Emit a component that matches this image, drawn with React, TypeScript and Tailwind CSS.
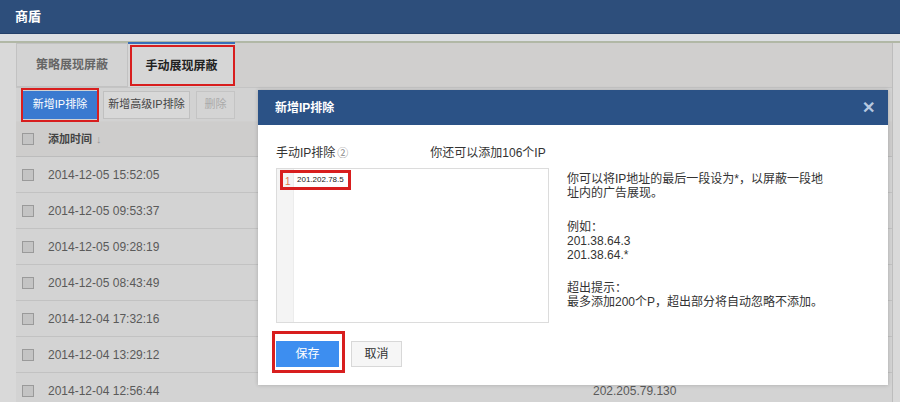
import React from 'react';

const rows = [
    { time: '2014-12-05 15:52:05', ip: '' },
    { time: '2014-12-05 09:53:37', ip: '' },
    { time: '2014-12-05 09:28:19', ip: '' },
    { time: '2014-12-05 08:43:49', ip: '' },
    { time: '2014-12-04 17:32:16', ip: '' },
    { time: '2014-12-04 13:29:12', ip: '' },
    { time: '2014-12-04 12:56:44', ip: '202.205.79.130' },
];

const Checkbox: React.FC = () => (
    <span className="inline-block w-[12px] h-[12px] border border-[#9a9a9a] bg-[#c4c4c4] shrink-0" />
);

const App: React.FC = () => {
    return (
        <div
            className="relative w-[900px] h-[402px] overflow-hidden bg-[#d9d9d9]"
            style={{ fontFamily: '"Liberation Sans", "Noto Sans CJK SC", sans-serif' }}
        >
            {/* top bar */}
            <div className="h-[34px] bg-[#2d4e7b] flex items-center pl-[15px] border-b border-[#23406a]">
                <span className="text-white text-[13px] font-bold">商盾</span>
            </div>
            <div className="h-[7px] bg-[#dcdfe3]" />
            <div className="h-[2px] bg-[#b1b8a6]" />

            {/* page body */}
            <div className="ml-[16px] w-[877px] border-r border-[#bdbdbd] bg-[#d0cfce] h-[359px]">
                {/* tabs */}
                <div className="flex h-[45px] items-end border-b border-[#c4c4c4]">
                    <div className="w-[112px] h-[44px] flex items-center justify-center bg-[#d3d3d3] border border-[#c2c2c2] text-[12px] text-[#666] font-bold">
                        策略展现屏蔽
                    </div>
                    <div className="w-[107px] h-[45px] flex items-center justify-center bg-[#d6d6d6] border-t-2 border-[#3a6fb8] text-[12px] text-[#222] font-bold relative">
                        <span className="absolute left-[2px] top-[1px] w-[105px] h-[41px] border-2 border-[#d81e1e]" />
                        手动展现屏蔽
                    </div>
                </div>

                {/* buttons */}
                <div className="flex items-center h-[33px] pl-[7px] gap-[6px] bg-[#d2d2d2]">
                    <div className="relative">
                        <span className="absolute -left-[2px] -top-[3px] w-[78px] h-[34px] border-2 border-[#d81e1e]" />
                        <div className="w-[74px] h-[28px] bg-[#3a7ad0] text-white text-[11px] flex items-center justify-center">
                            新增IP排除
                        </div>
                    </div>
                    <div className="w-[87px] h-[28px] bg-[#d8d8d8] border border-[#c0c0c0] text-[#444] text-[11px] flex items-center justify-center">
                        新增高级IP排除
                    </div>
                    <div className="w-[39px] h-[28px] bg-[#d4d4d4] border border-[#c4c4c4] text-[#aaa] text-[11px] flex items-center justify-center">
                        删除
                    </div>
                </div>

                {/* table */}
                <div className="mt-[1px]">
                    <div className="h-[35px] flex items-center pl-[6px] border-b border-[#bcbcbc] bg-[#cecdcc]">
                        <Checkbox />
                        <span className="ml-[14px] text-[11px] font-bold text-[#444]">添加时间</span>
                        <span className="ml-[4px] text-[11px] text-[#999]">↓</span>
                    </div>
                    {rows.map((r) => (
                        <div
                            key={r.time}
                            className="h-[36px] flex items-center pl-[6px] border-b border-[#c2c2c2] bg-[#d3d3d3]"
                        >
                            <Checkbox />
                            <span className="ml-[14px] w-[545px] text-[12px] text-[#5a5a5a]">{r.time}</span>
                            <span className="text-[12px] text-[#5a5a5a]">{r.ip}</span>
                        </div>
                    ))}
                </div>
            </div>

            {/* modal */}
            <div className="absolute left-[258px] top-[90px] w-[630px] h-[295px] bg-white shadow-[0_0_4px_rgba(0,0,0,0.2)]">
                <div className="h-[35px] bg-[#2b5286] flex items-center justify-between pl-[17px] pr-[13px]">
                    <span className="text-white text-[12px] font-bold">新增IP排除</span>
                    <span className="text-[#b6c8e0] text-[16px] font-bold leading-none">✕</span>
                </div>
                <div className="flex pl-[18px] pt-[20px]">
                    <div className="w-[273px]">
                        <div className="flex text-[12px] text-[#333] h-[16px] items-center">
                            <span>手动IP排除</span>
                            <span className="ml-[2px] text-[#888] text-[11px]">②</span>
                            <span className="ml-[82px]">你还可以添加106个IP</span>
                        </div>
                        <div className="relative mt-[7px] w-[273px] h-[155px] border border-[#dcdcdc] flex">
                            <div className="w-[17px] bg-[#f4f4f4] border-r border-[#ececec]" />
                            <span className="absolute left-[3px] top-[1px] w-[71px] h-[20px] border-[3px] border-[#d81e1e]" />
                            <span className="absolute left-[8px] top-[5px] text-[10px] text-[#e07a50]">1</span>
                            <span className="absolute left-[20px] top-[5px] text-[8px] text-[#222]">201.202.78.5</span>
                        </div>
                        <div className="flex items-center mt-[18px] gap-[12px]">
                            <div className="relative">
                                <span className="absolute -left-[4px] -top-[10px] w-[73px] h-[42px] border-[3px] border-[#d81e1e]" />
                                <div className="w-[63px] h-[26px] bg-[#3d8ef0] text-white text-[12px] flex items-center justify-center">
                                    保存
                                </div>
                            </div>
                            <div className="w-[51px] h-[26px] bg-[#f6f6f6] border border-[#d8d8d8] text-[#333] text-[12px] flex items-center justify-center">
                                取消
                            </div>
                        </div>
                    </div>
                    <div className="ml-[18px] pt-[27px] text-[12px] leading-[14px] text-[#333] w-[260px]">
                        <p>你可以将IP地址的最后一段设为*，以屏蔽一段地址内的广告展现。</p>
                        <p className="mt-[20px]">例如：</p>
                        <p>201.38.64.3</p>
                        <p>201.38.64.*</p>
                        <p className="mt-[19px]">超出提示：</p>
                        <p className="whitespace-nowrap">最多添加200个P，超出部分将自动忽略不添加。</p>
                    </div>
                </div>
            </div>
        </div>
    );
};

export default App;
